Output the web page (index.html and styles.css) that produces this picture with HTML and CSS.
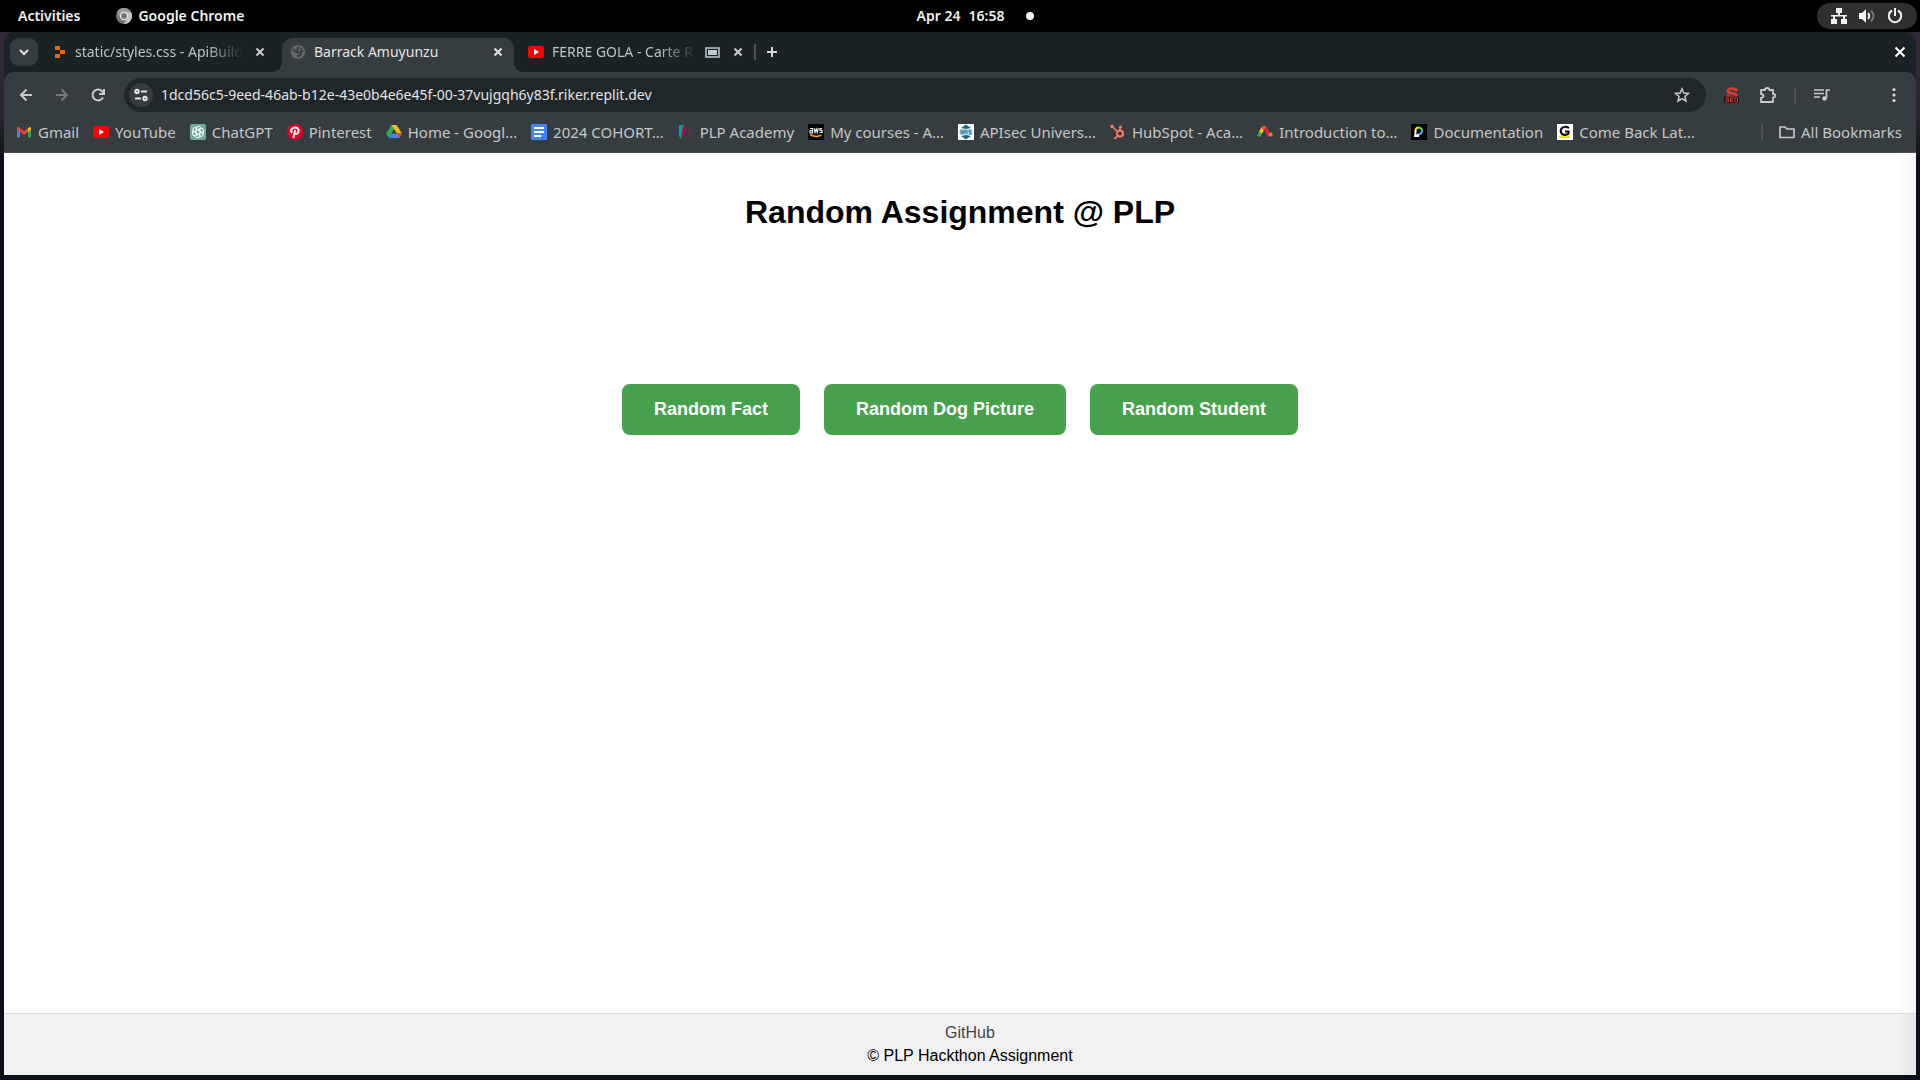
FILE: index.html
```html
<!DOCTYPE html>
<html lang="en">
<head>
<meta charset="utf-8">
<title>Barrack Amuyunzu</title>
<link rel="stylesheet" href="styles.css">
</head>
<body>
<header class="system-bar">
  <div class="system-left">
    <button class="system-button">Activities</button>
    <button class="system-button app-button">
      <svg class="icon" viewBox="0 0 16 16"><circle cx="8" cy="8" r="8" fill="#777"/><path d="M8 4h7a8 8 0 0 1-7 12l3.500-6z" fill="#c4c4c4"/><path d="M1 4a8 8 0 0 1 14 0H8a4 4 0 0 0-3.500 6z" fill="#999"/><circle cx="8" cy="8" r="4.200" fill="#eee"/><circle cx="8" cy="8" r="3" fill="#777"/></svg>
      Google Chrome
    </button>
  </div>
  <button class="system-button clock"><span>Apr 24</span><span>16:58</span><span class="clock-dot"></span></button>
  <button class="system-button status-menu" aria-label="System menu">
    <svg class="icon" viewBox="0 0 16 16" fill="#f2f2f2"><path d="M5 0h6v5H9v2h7v1.500h-2V11h2v5h-6v-5h2V8.500H4V11h2v5H0v-5h2V8.500H0V7h7V5H5z"/></svg>
    <svg class="icon" viewBox="0 0 16 16" fill="none"><path d="M0 5h3l4-4v14l-4-4H0z" fill="#f2f2f2"/><path d="M9 5q2.500 3 0 6" stroke="#f2f2f2" stroke-width="2"/><path d="M12 2.500q5 5.500 0 11" stroke="#777" stroke-width="2"/></svg>
    <svg class="icon" viewBox="0 0 16 16" fill="none" stroke="#f2f2f2" stroke-width="2"><path d="M5 2.500a6.200 6.200 0 1 0 6 0M8 0v8"/></svg>
  </button>
</header>

<div class="window">
  <nav class="tab-strip" aria-label="Tabs">
    <button class="tab-search" aria-label="Search tabs"><svg class="icon" viewBox="0 0 16 16" fill="none" stroke="#e3e3e3" stroke-width="2"><path d="M4 6l4 4 4-4"/></svg></button>
    <div class="tab tab-first">
      <svg class="icon" viewBox="0 0 16 16" fill="#f26207"><path d="M3 2h4.500q.5 0 .5.500V6H3.500Q3 6 3 5.500zM8 6h4.500q.5 0 .5.500v3q0 .5-.5.500H8zM3.500 10H8v3.500q0 .5-.5.500h-4q-.5 0-.5-.5v-3q0-.5.5-.5z"/></svg>
      <span class="tab-title tab-title-long">static/styles.css - ApiBuild</span>
      <button class="icon-button" aria-label="Close tab"><svg class="icon" viewBox="0 0 16 16" fill="none" stroke="#c9cdce" stroke-width="2"><path d="M4.500 4.500l7 7m0-7l-7 7"/></svg></button>
    </div>
    <div class="tab tab-active">
      <svg class="icon" viewBox="0 0 16 16"><circle cx="8" cy="8" r="7" fill="#64686b"/><path d="M3 5q3 4 5 3-2-3 1-5m-1 5q3 0 3 2-1 2-4 2m5-8q-2 2 1 4" fill="none" stroke="#363d40" stroke-width="2"/></svg>
      <span class="tab-title">Barrack Amuyunzu</span>
      <button class="icon-button" aria-label="Close tab"><svg class="icon" viewBox="0 0 16 16" fill="none" stroke="#e3e3e3" stroke-width="2"><path d="M4.500 4.500l7 7m0-7l-7 7"/></svg></button>
    </div>
    <div class="tab tab-media">
      <svg class="icon" viewBox="0 0 16 16"><rect y="2" width="16" height="12" rx="3" fill="#f00"/><path d="M6 5l5 3-5 3z" fill="#fff"/></svg>
      <span class="tab-title tab-title-long">FERRE GOLA - Carte R</span>
      <svg class="icon" viewBox="0 0 16 16" fill="none"><rect x="2" y="4" width="13" height="9" stroke="#b9cbd1" stroke-width="1.500"/><rect x="4" y="6" width="9" height="5" fill="#b9cbd1"/></svg>
      <button class="icon-button" aria-label="Close tab"><svg class="icon" viewBox="0 0 16 16" fill="none" stroke="#c9cdce" stroke-width="2"><path d="M4.500 4.500l7 7m0-7l-7 7"/></svg></button>
    </div>
    <span class="divider"></span>
    <button class="icon-button new-tab" aria-label="New tab"><svg class="icon" viewBox="0 0 16 16" fill="none" stroke="#d6dadb" stroke-width="2"><path d="M8 3v10M3 8h10"/></svg></button>
    <button class="icon-button window-close" aria-label="Close window"><svg class="icon" viewBox="0 0 16 16" fill="none" stroke="#fff" stroke-width="2"><path d="M3.500 3.500l9 9m0-9l-9 9"/></svg></button>
  </nav>

  <div class="toolbar">
    <div class="history-buttons">
      <button class="icon-button" aria-label="Back"><svg class="icon" viewBox="0 0 16 16" fill="none" stroke="#c7c9ca" stroke-width="2"><path d="M14 8H3m5.500-5.500L3 8l5.500 5.500"/></svg></button>
      <button class="icon-button" aria-label="Forward"><svg class="icon" viewBox="0 0 16 16" fill="none" stroke="#75797b" stroke-width="2"><path d="M2 8h11M7.500 2.500L13 8l-5.500 5.500"/></svg></button>
      <button class="icon-button" aria-label="Reload"><svg class="icon" viewBox="0 0 16 16" fill="none" stroke="#c7c9ca" stroke-width="2"><path d="M13 10.500A5.500 5.500 0 1 1 12 4l1.500 2M14 2v5H9"/></svg></button>
    </div>
    <div class="address-bar">
      <button class="site-info" aria-label="Site information"><svg class="icon" viewBox="0 0 16 16" fill="none" stroke="#e3e3e3" stroke-width="2"><circle cx="4" cy="4.500" r="1.700"/><path d="M8 4.500h6M2 11.500h6"/><circle cx="12" cy="11.500" r="1.700"/></svg></button>
      <input class="address-input" type="text" aria-label="Address" value="1dcd56c5-9eed-46ab-b12e-43e0b4e6e45f-00-37vujgqh6y83f.riker.replit.dev">
      <button class="icon-button" aria-label="Bookmark this page"><svg class="icon" viewBox="0 0 16 16" fill="none" stroke="#c7c9ca" stroke-width="1.500"><path d="M8 1.800l1.800 4.200 4.700.4-3.600 3.100 1.100 4.600L8 11.700l-4 2.400 1.100-4.600L1.500 6.400 6.200 6z"/></svg></button>
    </div>
    <div class="extensions">
      <button class="icon-button" aria-label="SEO extension"><svg class="icon" viewBox="0 0 16 16"><path d="M13 4Q12 1.600 8.300 1.600 4 1.600 4 4q0 1.800 4 2.400 4.500.6 4.500 2.600 0 1.500-4 1.500T3 8.500" fill="none" stroke="#e23b2e" stroke-width="2.800"/><path d="M0 9.500h15V16H0z" fill="#1b1310"/><path d="M5 10.800H2v2h2.500v2H1M9.500 10.800h-3v4h3M6.500 12.800h2.500M11 10.800h2.500v4H11z" fill="none" stroke="#c63c30"/></svg></button>
      <button class="icon-button" aria-label="Extensions"><svg class="icon" viewBox="0 0 16 16"><path d="M1 3h4q0-2 2.200-2T9.400 3H13v4q2.500 0 2.500 1.700T13 10.500V15H1v-4q2.500-.3 2.500-2T1 7z" fill="none" stroke="#c7c9ca" stroke-width="1.800" stroke-linejoin="round"/></svg></button>
      <span class="divider"></span>
      <button class="icon-button" aria-label="Media controls"><svg class="icon" viewBox="0 0 16 16" fill="none" stroke="#c7c9ca" stroke-width="1.700"><path d="M0 3h10M0 6.500h10M0 10h6M16 3h-3.500v8"/><circle cx="10.500" cy="11.500" r="2.300" fill="#c7c9ca" stroke="none"/></svg></button>
      <button class="icon-button menu-button" aria-label="Menu"><svg class="icon" viewBox="0 0 16 16" fill="#d4d6d7"><circle cx="8" cy="2.500" r="1.600"/><circle cx="8" cy="8" r="1.600"/><circle cx="8" cy="13.500" r="1.600"/></svg></button>
    </div>
  </div>

  <nav class="bookmarks" aria-label="Bookmarks">
    <a class="bookmark" href="#"><svg class="icon" viewBox="0 0 16 16"><path d="M1 4v9.500h3V7z" fill="#4285f4"/><path d="M12 7v6.500h3V4z" fill="#34a853"/><path d="M12 4.500V8l3-2.500V4q-1-2-3 .5z" fill="#fbbc04"/><path d="M1 4q.8-2.500 3 0l4 3 4-3v4l-4 3-4-3-3-2.500z" fill="#ea4335"/></svg>Gmail</a>
    <a class="bookmark" href="#"><svg class="icon" viewBox="0 0 16 16"><rect y="2" width="16" height="12" rx="3" fill="#f00"/><path d="M6 5l5 3-5 3z" fill="#fff"/></svg>YouTube</a>
    <a class="bookmark" href="#"><svg class="icon" viewBox="0 0 16 16"><rect width="16" height="16" rx="2" fill="#74aa9c"/><g fill="none" stroke="#fff" stroke-width=".9"><path d="M6 8V4.500Q6.500 2 9 2.200q2 .4 2.500 2.300L8 6.500"/><path d="M6 8V4.500Q6.500 2 9 2.200q2 .4 2.500 2.300L8 6.500" transform="rotate(60 8 8)"/><path d="M6 8V4.500Q6.500 2 9 2.200q2 .4 2.500 2.300L8 6.500" transform="rotate(120 8 8)"/><path d="M6 8V4.500Q6.500 2 9 2.200q2 .4 2.500 2.300L8 6.500" transform="rotate(180 8 8)"/><path d="M6 8V4.500Q6.500 2 9 2.200q2 .4 2.500 2.300L8 6.500" transform="rotate(240 8 8)"/><path d="M6 8V4.500Q6.500 2 9 2.200q2 .4 2.500 2.300L8 6.500" transform="rotate(300 8 8)"/></g></svg>ChatGPT</a>
    <a class="bookmark" href="#"><svg class="icon" viewBox="0 0 16 16"><circle cx="8" cy="8" r="8" fill="#e60023"/><path d="M5 9Q3 6 5.500 4.200 8 2.800 10.500 4.200q2 2 .5 4.500-1.500 2-3.500.6M8.300 6L6.300 14" fill="none" stroke="#fff" stroke-width="1.900"/></svg>Pinterest</a>
    <a class="bookmark" href="#"><svg class="icon" viewBox="0 0 16 16"><path d="M5.500 1h5L8 5.500 3 14 0 9.500z" fill="#34a853"/><path d="M5.500 1h5L16 9.500h-5z" fill="#fbbc04"/><path d="M5.500 9.500H16L13 14H3z" fill="#4285f4"/><path d="M11 9.500h5L13 14z" fill="#ea4335"/><path d="M8 5.500l2.500 4h-5z" fill="#363d40"/></svg>Home - Googl…</a>
    <a class="bookmark" href="#"><svg class="icon" viewBox="0 0 16 16"><rect width="16" height="16" rx="1" fill="#4285f4"/><path d="M3 4h10M3 8h10M3 12h7" stroke="#fff" stroke-width="2"/></svg>2024 COHORT…</a>
    <a class="bookmark" href="#"><svg class="icon" viewBox="0 0 16 16"><path d="M1 1h5L4 8l-1 7-2-3z" fill="#00a6a6"/><path d="M5 1.500q4 1 2.800 6.500L3.500 14.500 4 8z" fill="#b00b4a"/><path d="M10 5.500h4M9 8h5M9 10.500h6" stroke="#86204a"/></svg>PLP Academy</a>
    <a class="bookmark" href="#"><svg class="icon" viewBox="0 0 16 16" fill="none"><path d="M0 0h16v16H0z" fill="#05080b"/><path d="M2 4.500h2.500V9H2V6.800h2.500M6 4l1 4.500L8.200 5l1.100 3.500 1-4.500M14 4.500h-2v2h2v2h-2.500" stroke="#fff" stroke-width="1.100"/><path d="M2 10.500q6 3.500 11.500.5" stroke="#f90" stroke-width="1.500"/></svg>My courses - A…</a>
    <a class="bookmark" href="#"><svg class="icon" viewBox="0 0 16 16"><path d="M0 0h16v16H0z" fill="#fff"/><path d="M3 4l5-3.500L13 4l-5 1zM3 12l5 3.500 5-3.500-5-1z" fill="#176b8c"/><path d="M1.500 5h13v6h-13z" fill="#b3d4e0"/><path d="M3 10V6.500h1.500V10M6 10V6.500h1.500v2H6M9 6v4M13 6.500h-2V8h2v2h-2" fill="none" stroke="#246b89" stroke-width=".8"/></svg>APIsec Univers…</a>
    <a class="bookmark" href="#"><svg class="icon" viewBox="0 0 16 16" fill="none" stroke="#ff7a59"><circle cx="10" cy="9.500" r="3" stroke-width="2"/><path d="M10 6V3M8 8L2 2.500M8 12l-2.500 2" stroke-width="1.500"/><g fill="#ff7a59" stroke="none"><circle cx="10.500" cy="3" r="1.600"/><circle cx="2" cy="2.500" r="1.700"/><circle cx="5.500" cy="14" r="1.300"/></g></svg>HubSpot - Aca…</a>
    <a class="bookmark" href="#"><svg class="icon" viewBox="0 0 16 16" fill="none" stroke-width="3.500"><path d="M1.500 12.500L4 8" stroke="#35a853"/><path d="M3.500 8.500L6 4" stroke="#fbcb05"/><path d="M5 4h4" stroke="#f25a24"/><path d="M8.500 4l3 6" stroke="#e8194b"/><path d="M10.500 9l1.500 3.500" stroke="#a52b87"/><path d="M12 11.500l3-2" stroke="#f47d20"/></svg>Introduction to…</a>
    <a class="bookmark" href="#"><svg class="icon" viewBox="0 0 16 16" fill="none" stroke-width="2"><path d="M0 0h16v16H0z" fill="#000"/><path d="M4.500 13V6" stroke="#fff"/><path d="M4.500 6.500q0-3 3.500-3" stroke="#ffe600"/><path d="M7.500 3.500q3.500 0 3.500 3.500" stroke="#2edb76"/><path d="M11 6.500Q11 10 7.500 10.500" stroke="#19c5ff"/><path d="M3.500 12H7v-2" stroke="#fff"/></svg>Documentation</a>
    <a class="bookmark" href="#"><svg class="icon" viewBox="0 0 16 16"><path d="M0 0h16v16H0z" fill="#fff"/><path d="M2 12l11-1v3H2z" fill="#ffe800"/><path d="M12 4Q8 1.500 5 4 2.500 7 5 10q3.500 2 6.500-.5V7.500H8" fill="none" stroke="#111" stroke-width="2.200"/></svg>Come Back Lat…</a>
    <div class="all-bookmarks">
      <span class="divider"></span>
      <a class="bookmark" href="#"><svg class="icon" viewBox="0 0 16 16"><path d="M1 3h5l2 2h7v8.500H1z" fill="none" stroke="#c7c9ca" stroke-width="1.700" stroke-linejoin="round"/></svg>All Bookmarks</a>
    </div>
  </nav>

  <div class="page">
    <main class="content">
      <h1 class="page-title">Random Assignment @ PLP</h1>
      <div class="actions">
        <button class="action">Random Fact</button>
        <button class="action">Random Dog Picture</button>
        <button class="action">Random Student</button>
      </div>
    </main>
    <footer class="page-footer">
      <a class="footer-link" href="#">GitHub</a>
      <p class="copyright">© PLP Hackthon Assignment</p>
    </footer>
  </div>
</div>
</body>
</html>
```

FILE: styles.css
```css
* { box-sizing: border-box; }

body {
  margin: 0;
  min-height: 100vh;
  display: flex;
  flex-direction: column;
  background: linear-gradient(#33283a, #2e2637 112px, #0b0f1a 160px, #0b0f1a);
  font-family: "Noto Sans", sans-serif;
  font-size: 15px;
}

button {
  padding: 0;
  border: 0;
  background: none;
  color: inherit;
  font: inherit;
}

.icon { width: 16px; height: 16px; flex: none; display: block; }

.icon-button {
  display: flex;
  align-items: center;
  justify-content: center;
  width: 20px;
  height: 20px;
  flex: none;
}

.divider { width: 2px; height: 16px; flex: none; background: #4b5154; }

/* System bar */
.system-bar {
  display: grid;
  grid-template-columns: 1fr auto 1fr;
  align-items: center;
  height: 32px;
  padding: 0 3px 0 18px;
  background: #000;
  color: #f2f2f2;
  font-size: 14px;
  font-weight: 600;
  line-height: 18px;
}

.system-left { display: flex; gap: 36px; }
.system-button { display: flex; align-items: center; }
.app-button { gap: 6px; }
.clock { gap: 8px; padding-left: 16px; }
.clock-dot { width: 8px; height: 8px; margin-left: 14px; border-radius: 50%; background: #f2f2f2; }

.status-menu {
  justify-self: end;
  gap: 12px;
  height: 26px;
  padding: 0 14px;
  border-radius: 13px;
  background: #303030;
}

/* Browser window */
.window {
  flex: 1;
  display: flex;
  flex-direction: column;
  margin: 0 4px 5px;
  border-radius: 10px 10px 0 0;
  overflow: hidden;
  background: #1b2225;
}

.tab-strip { display: flex; align-items: center; height: 40px; padding: 0 6px; color: #b9c5c9; }

.tab-search {
  display: flex;
  align-items: center;
  justify-content: center;
  width: 28px;
  height: 28px;
  border-radius: 9px;
  background: #363d40;
}

.tab { display: flex; align-items: center; gap: 8px; width: 232px; height: 40px; padding: 0 6px 0 8px; }
.tab-title { flex: 1; min-width: 0; overflow: hidden; white-space: nowrap; font-size: 14px; line-height: 18px; }
.tab-title-long { mask-image: linear-gradient(to right, #000 calc(100% - 36px), transparent); }
.tab-first { width: 238px; margin-left: 6px; padding-right: 12px; gap: 7px; }

.tab-active {
  position: relative;
  align-self: flex-end;
  height: 34px;
  padding-bottom: 6px;
  border-radius: 10px 10px 0 0;
  background: #363d40;
  color: #e3e3e3;
}

.tab-active::before,
.tab-active::after {
  content: "";
  position: absolute;
  bottom: 0;
  width: 10px;
  height: 10px;
}

.tab-active::before { right: 100%; background: radial-gradient(circle at 0 0, transparent 10px, #363d40 10px); }
.tab-active::after { left: 100%; background: radial-gradient(circle at 100% 0, transparent 10px, #363d40 10px); }

.tab-media { width: 240px; padding-left: 14px; }
.new-tab { margin-left: 6px; }
.window-close { margin-left: auto; }

/* Toolbar */
.toolbar {
  display: flex;
  align-items: center;
  height: 46px;
  padding: 0 12px;
  border-radius: 10px 10px 0 0;
  background: #363d40;
}

.history-buttons { display: flex; gap: 16px; margin-right: 16px; }

.address-bar {
  flex: 1;
  display: flex;
  align-items: center;
  gap: 8px;
  height: 34px;
  padding: 0 14px 0 5px;
  border-radius: 17px;
  background: #20272a;
}

.site-info {
  display: flex;
  align-items: center;
  justify-content: center;
  width: 24px;
  height: 24px;
  border-radius: 50%;
  background: #363d40;
}

.address-input {
  flex: 1;
  min-width: 0;
  padding: 0;
  border: 0;
  outline: 0;
  background: none;
  color: #e3e3e3;
  font: 14px/18px "Noto Sans", sans-serif;
}

.extensions { display: flex; align-items: center; gap: 16px; margin-left: 16px; }
.menu-button { margin-left: 36px; }

/* Bookmarks */
.bookmarks {
  display: flex;
  align-items: center;
  gap: 14px;
  height: 35px;
  padding: 0 14px 7px 12px;
  border-bottom: 1px solid #4a4d4f;
  background: #363d40;
  line-height: 20px;
}

.bookmark { display: flex; align-items: center; gap: 6px; color: #c4c7c8; text-decoration: none; white-space: nowrap; }
.all-bookmarks { display: flex; align-items: center; gap: 16px; margin-left: auto; }

/* Web page */
.page {
  flex: 1;
  display: flex;
  flex-direction: column;
  background: linear-gradient(to left, #f4f4f4, #fff 16px);
  color: #000;
  font-family: "Liberation Sans", Arial, sans-serif;
  font-size: 16px;
}

.content { flex: 1; display: flex; flex-direction: column; align-items: center; }
.page-title { margin: 40px 0 0; font-size: 32px; line-height: 38px; }
.actions { display: flex; gap: 24px; margin-top: 153px; }

.action {
  height: 51px;
  padding: 0 32px;
  border-radius: 8px;
  background: #47a04b;
  color: #fff;
  font-size: 18px;
  font-weight: 700;
}

.page-footer {
  display: flex;
  flex-direction: column;
  align-items: center;
  padding: 7px 0 8px;
  border-top: 1px solid #ddd;
  background: linear-gradient(to left, #e6e6e6, #f1f1f1 18px);
  line-height: 23px;
}

.footer-link,
.copyright { margin: 0 0 0 20px; }
.footer-link { color: #444; text-decoration: none; }
```
